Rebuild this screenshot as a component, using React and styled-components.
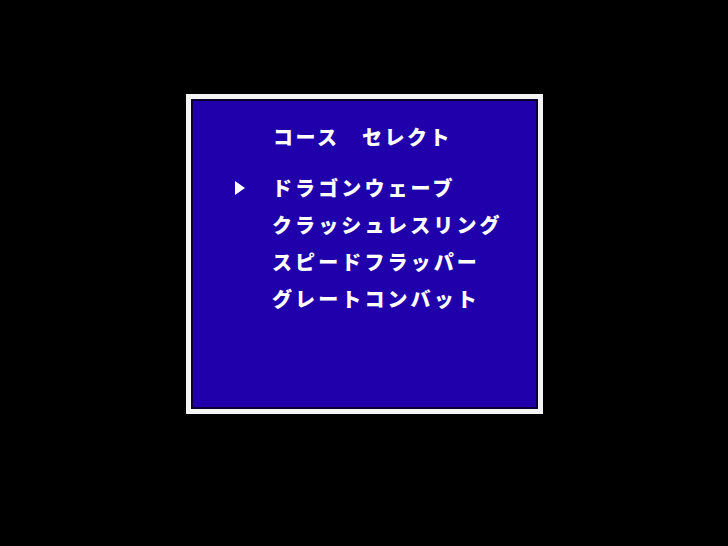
import React from 'react'
import styled, { createGlobalStyle } from 'styled-components'

const GlobalStyle = createGlobalStyle`
  html, body {
    margin: 0;
    padding: 0;
    background: #000;
  }
  body {
    font-family: "Noto Sans CJK JP", "DejaVu Sans", sans-serif;
  }
`

const Screen = styled.main`
  width: 728px;
  height: 546px;
  background: #000;
  display: flex;
  justify-content: center;
  align-items: flex-start;
  padding-top: 94px;
  padding-left: 1px;
  box-sizing: border-box;
`

const Window = styled.section`
  width: 357px;
  height: 320px;
  box-sizing: border-box;
  border: 5px solid #f4f4f4;
  background: #2000aa;
  box-shadow: inset 0 0 0 2px #0a0030;
  padding: 26px 0 0 0;
  color: #fff;
`

const Title = styled.h1`
  margin: 0 0 21px 82px;
  font-size: 20px;
  line-height: 23px;
  font-weight: 900;
  letter-spacing: 2.5px;
  white-space: pre;
`

const Menu = styled.ul`
  list-style: none;
  margin: 0;
  padding: 0;
`

const Item = styled.li`
  display: grid;
  grid-template-columns: 38px 1fr;
  align-items: center;
  height: 37px;
  padding-left: 43px;
  font-size: 20px;
  font-weight: 900;
  letter-spacing: 3.1px;
  white-space: nowrap;
`

const Cursor = styled.span`
  width: 0;
  height: 0;
  border-top: 7px solid transparent;
  border-bottom: 7px solid transparent;
  border-left: 10px solid ${(p) => (p.$active ? '#fff' : 'transparent')};
  margin-left: 1px;
`

const courses = ['ドラゴンウェーブ', 'クラッシュレスリング', 'スピードフラッパー', 'グレートコンバット']

export default function App() {
  return (
    <>
      <GlobalStyle />
      <Screen>
        <Window>
          <Title>{'コース　セレクト'}</Title>
          <Menu>
            {courses.map((name, i) => (
              <Item key={name}>
                <Cursor $active={i === 0} />
                <span>{name}</span>
              </Item>
            ))}
          </Menu>
        </Window>
      </Screen>
    </>
  )
}
